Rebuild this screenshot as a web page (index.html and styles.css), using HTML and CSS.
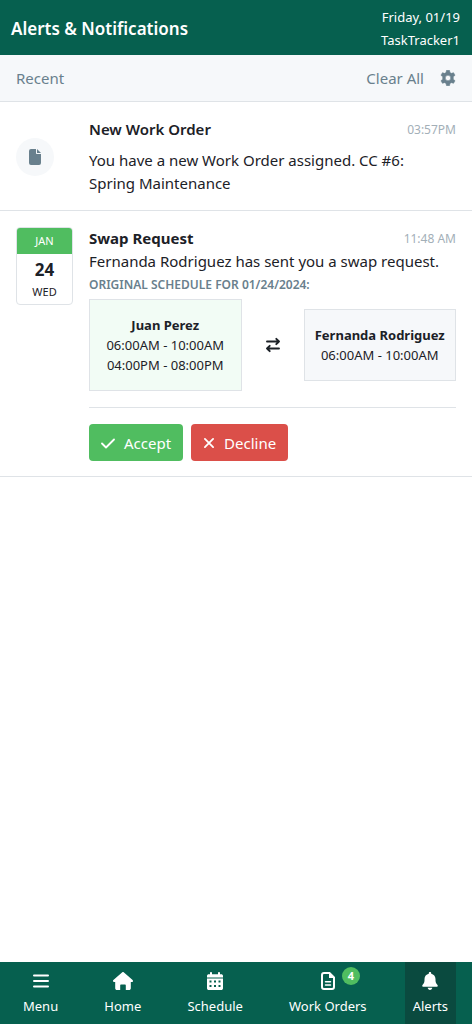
FILE: index.html
```html
<!DOCTYPE html>
<html lang="en">
<head>
<meta charset="utf-8">
<meta name="viewport" content="width=device-width, initial-scale=1">
<title>Alerts &amp; Notifications</title>
<link rel="stylesheet" href="styles.css">
</head>
<body>
<header class="topbar">
  <h1 class="topbar-title">Alerts &amp; Notifications</h1>
  <div class="topbar-info"><div>Friday, 01/19</div><div>TaskTracker1</div></div>
</header>
<main class="content">
  <div class="toolbar">
    <h2 class="toolbar-title">Recent</h2>
    <button class="toolbar-btn" type="button">Clear All</button>
    <button class="toolbar-btn toolbar-gear" type="button" aria-label="Settings">
      <svg width="16" height="16" viewBox="0 0 16 16" fill="currentColor" fill-rule="evenodd" stroke="currentColor" stroke-width=".5" stroke-linejoin="round"><path d="M6.500.3h3l.5 2.300 1.300.75 2.250-.7 1.500 2.600L13.300 6.800v2.400l1.750 1.550-1.500 2.600-2.250-.7-1.300.75-.5 2.300h-3L6 13.400l-1.300-.75-2.250.7-1.500-2.600L2.700 9.200V6.800L.950 5.250l1.500-2.600 2.250.7L6 2.600zM8 5.300a2.700 2.700 0 1 0 0 5.400 2.700 2.700 0 0 0 0-5.400z"/></svg>
    </button>
  </div>
  <article class="alert">
    <div class="alert-side alert-side-center">
      <div class="alert-icon">
        <svg width="12" height="16" viewBox="0 0 12 16" fill="currentColor"><path d="M2 0h5v4c0 .6.400 1 1 1h4v9a2 2 0 0 1-2 2H2a2 2 0 0 1-2-2V2a2 2 0 0 1 2-2zM8 0l4 4H8z"/></svg>
      </div>
    </div>
    <div class="alert-body">
      <div class="alert-head"><h3 class="alert-title">New Work Order</h3><time class="alert-time">03:57PM</time></div>
      <p class="alert-text alert-text-spaced">You have a new Work Order assigned. CC #6: Spring Maintenance</p>
    </div>
  </article>
  <article class="alert">
    <div class="alert-side">
      <div class="date-card"><div class="date-month">JAN</div><div class="date-day">24</div><div class="date-weekday">WED</div></div>
    </div>
    <div class="alert-body">
      <div class="alert-head"><h3 class="alert-title alert-title-strong">Swap Request</h3><time class="alert-time">11:48 AM</time></div>
      <p class="alert-text">Fernanda Rodriguez has sent you a swap request.</p>
      <p class="swap-label">ORIGINAL SCHEDULE FOR 01/24/2024:</p>
      <div class="swap">
        <div class="shift shift-own"><strong>Juan Perez</strong><div>06:00AM - 10:00AM</div><div>04:00PM - 08:00PM</div></div>
        <svg class="swap-icon" width="14" height="16" viewBox="0 0 14 16" fill="none" stroke="currentColor" stroke-width="1.900" stroke-linecap="round" stroke-linejoin="round"><path d="M1 4.500h12M10.300 1.800L13 4.500l-2.700 2.700M13 11.500H1M3.700 8.800L1 11.500l2.700 2.700"/></svg>
        <div class="shift"><strong>Fernanda Rodriguez</strong><div>06:00AM - 10:00AM</div></div>
      </div>
      <div class="actions">
        <button class="btn btn-accept" type="button"><svg width="14" height="16" viewBox="0 0 14 16" fill="none" stroke="currentColor" stroke-width="1.800" stroke-linecap="round" stroke-linejoin="round"><path d="M1 8.500l4 4 8-8"/></svg>Accept</button>
        <button class="btn btn-decline" type="button"><svg width="12" height="16" viewBox="0 0 12 16" fill="none" stroke="currentColor" stroke-width="1.800" stroke-linecap="round"><path d="M1.900 3.900l8.200 8.200M10.100 3.900l-8.200 8.200"/></svg>Decline</button>
      </div>
    </div>
  </article>
</main>
<nav class="tabs">
  <a class="tab" href="#menu"><svg width="16" height="18" viewBox="0 0 16 18" fill="none" stroke="currentColor" stroke-width="2" stroke-linecap="round"><path d="M1 3.500h14M1 9h14M1 14.500h14"/></svg>Menu</a>
  <a class="tab" href="#home"><svg width="20" height="18" viewBox="0 0 20 18" fill="currentColor"><path d="M10 0c.300 0 .500.100.700.300l8.900 7.800c.800.700.300 1.900-.600 1.900h-1.200v6.200c0 1-.800 1.800-1.800 1.800h-3.200v-4.500c0-.600-.400-1-1-1H8.200c-.600 0-1 .400-1 1V18H4c-1 0-1.800-.800-1.800-1.800V10H1c-1 0-1.400-1.200-.600-1.900L9.300.3c.200-.200.400-.300.700-.300z"/></svg>Home</a>
  <a class="tab" href="#schedule"><svg width="16" height="18" viewBox="0 0 16 18" fill="currentColor" fill-rule="evenodd"><path d="M4 0c.600 0 1 .500 1 1v1.200h6V1c0-.500.400-1 1-1s1 .500 1 1v1.200h1.200c1 0 1.800.700 1.800 1.600V5.500H0V3.800c0-.900.800-1.600 1.800-1.600H3V1c0-.500.400-1 1-1zM0 6.500h16v9.700c0 1-.800 1.800-1.800 1.800H1.800c-1 0-1.800-.800-1.800-1.800zM2.500 8.500v2h2v-2zm4.500 0v2h2v-2zm4.500 0v2h2v-2zM2.500 13v2h2v-2zM7 13v2h2v-2zm4.500 0v2h2v-2z"/></svg>Schedule</a>
  <a class="tab" href="#work-orders"><span class="tab-icon"><svg width="14" height="18" viewBox="0 0 14 18"><path d="M3 1h5.500L13 5.500V15a2 2 0 0 1-2 2H3a2 2 0 0 1-2-2V3a2 2 0 0 1 2-2z" fill="none" stroke="currentColor" stroke-width="2"/><path d="M8 1v5h5z" fill="currentColor"/><path d="M4.500 9.800h5M4.500 13h5" stroke="currentColor" stroke-width="1.500" stroke-linecap="round"/></svg><span class="badge">4</span></span>Work Orders</a>
  <a class="tab tab-active" href="#alerts" aria-current="page"><svg width="16" height="18" viewBox="0 0 16 18" fill="currentColor"><path d="M8 0c.700 0 1.200.500 1.200 1.100v.7c2.500.500 4.300 2.600 4.300 5.300v1.100c0 1.800.600 3.200 1.800 4.600.900 1 .400 2-.700 2H1.400c-1.100 0-1.600-1-.700-2 1.200-1.400 1.800-2.800 1.800-4.600V7.100c0-2.700 1.800-4.800 4.300-5.300v-.7C6.800.5 7.300 0 8 0zM5.700 15.800h4.600C10.300 17 9.200 18 8 18s-2.300-1-2.300-2.200z"/></svg>Alerts</a>
</nav>
</body>
</html>
```
FILE: styles.css
```css
* { box-sizing: border-box; }

body {
  margin: 0;
  min-height: 100vh;
  display: flex;
  flex-direction: column;
  background: #fff;
  color: #1c2127;
  font: 15px/24px "Noto Sans", "Open Sans", sans-serif;
}

h1, h2, h3, p { margin: 0; }

button { font: inherit; cursor: pointer; }

svg { display: block; flex: none; }

.topbar {
  display: flex;
  align-items: center;
  justify-content: space-between;
  min-height: 55px;
  padding: 6px 12px 3px 11px;
  background: #06604f;
  color: #fff;
}

.topbar-title { font-size: 17px; font-weight: 600; }

.topbar-info { font-size: 13px; line-height: 23px; text-align: right; }

.content { flex: 1; }

.toolbar {
  display: flex;
  align-items: center;
  gap: 16px;
  padding: 11px 16px;
  background: #f6f8fa;
  border-bottom: 1px solid #dfe3e7;
  color: #69808d;
}

.toolbar-title { flex: 1; font-size: 15px; font-weight: 400; }

.toolbar-btn { padding: 0; border: 0; background: none; color: inherit; }

.alert {
  display: flex;
  gap: 16px;
  padding: 16px 16px 15px;
  border-bottom: 1px solid #dfe3e7;
}

.alert-side { flex: 0 0 57px; }

.alert-side-center { display: flex; align-items: center; }

.alert-icon {
  display: grid;
  place-items: center;
  width: 38px;
  height: 38px;
  border-radius: 50%;
  background: #f6f8fa;
  color: #69808d;
}

.alert-body { flex: 1; min-width: 0; }

.alert-head { display: flex; justify-content: space-between; align-items: center; }

.alert-title { font-size: 15px; line-height: 23px; font-weight: 600; }

.alert-title-strong { font-weight: 700; }

.alert-time { font-size: 12px; line-height: 23px; color: #a3afb8; }

.alert-text { line-height: 23px; }

.alert-text-spaced { margin-top: 8px; padding-right: 8px; }

.date-card {
  overflow: hidden;
  padding-bottom: 2px;
  border: 1px solid #dfe3e7;
  border-radius: 4px;
  font-size: 11px;
  line-height: 20px;
  text-align: center;
}

.date-month { padding: 3px 0; background: #50bd60; color: #fff; }

.date-day { padding-top: 4px; font-size: 17px; line-height: 24px; font-weight: 700; }

.swap-label {
  padding-bottom: 2px;
  color: #69808d;
  font-size: 12px;
  font-weight: 600;
}

.swap {
  display: grid;
  grid-template-columns: 1fr auto 1fr;
  align-items: center;
  gap: 24px;
  padding-bottom: 16px;
  border-bottom: 1px solid #dfe3e7;
}

.shift {
  padding: 15px 8px;
  border: 1px solid #dfe3e7;
  background: #f6f8fa;
  font-size: 13px;
  line-height: 20px;
  text-align: center;
  white-space: nowrap;
}

.shift-own { background: #f2fcf5; }

.actions { display: flex; gap: 8px; padding-top: 16px; }

.btn {
  display: flex;
  align-items: center;
  gap: 9px;
  padding: 7px 12px 6px;
  border: 0;
  border-radius: 4px;
  color: #fff;
}

.btn-accept { background: #50bd60; }

.btn-decline { background: #db4f49; }

.tabs {
  display: flex;
  justify-content: space-between;
  padding: 0 16px 0 15px;
  background: #06604f;
}

.tab {
  display: flex;
  flex-direction: column;
  align-items: center;
  gap: 6px;
  padding: 10px 8px 8px;
  color: #fff;
  font-size: 13px;
  line-height: 20px;
  text-decoration: none;
}

.tab-active { background: #0a4a3f; }

.tab-icon { position: relative; }

.badge {
  position: absolute;
  top: -5px;
  left: 21px;
  width: 18px;
  height: 18px;
  border-radius: 50%;
  background: #50bd60;
  font-size: 11px;
  line-height: 18px;
  font-weight: 700;
  text-align: center;
}
```
